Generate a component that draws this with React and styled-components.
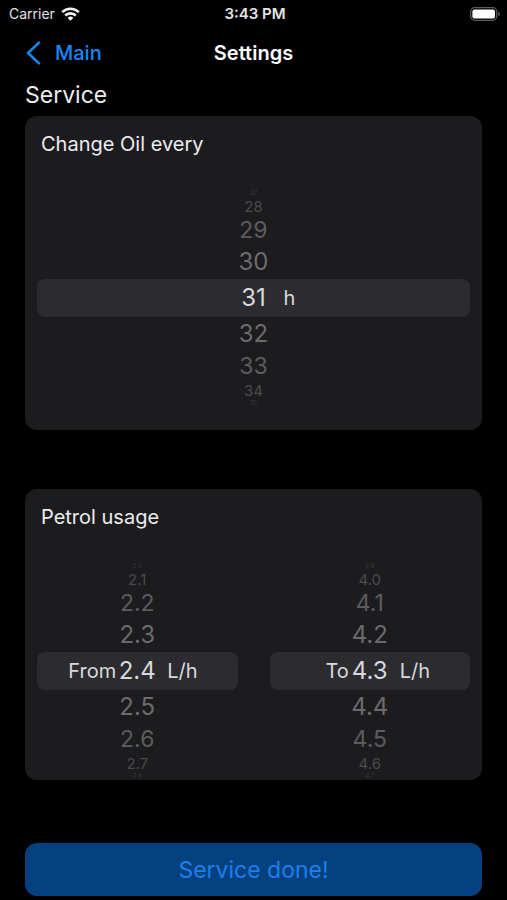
import { useState } from 'react';
import styled, { createGlobalStyle } from 'styled-components';

const GlobalStyle = createGlobalStyle`
    * {
        box-sizing: border-box;
    }

    body {
        margin: 0;
        background: #000000;
        color: #ececee;
        font-family: Inter, "Liberation Sans", sans-serif;
    }
`;

const Screen = styled.div`
    display: flex;
    flex-direction: column;
`;

const StatusBar = styled.div`
    display: grid;
    grid-template-columns: 1fr auto 1fr;
    align-items: center;
    height: 27px;
    padding: 0 6px 0 9px;
    font-size: 14px;
    color: #e4e4e4;
`;

const Carrier = styled.span`
    display: flex;
    align-items: center;
    gap: 6px;
`;

const Clock = styled.span`
    font-size: 15px;
    font-weight: 600;
`;

const BatteryIcon = styled.svg`
    justify-self: end;
`;

const NavBar = styled.nav`
    display: grid;
    grid-template-columns: 1fr auto 1fr;
    align-items: center;
    height: 52px;
    padding: 0 25px;
`;

const BackLink = styled.a`
    display: flex;
    align-items: center;
    gap: 14px;
    color: #1687f8;
    font-size: 20px;
    font-weight: 500;
    text-decoration: none;
`;

const NavTitle = styled.h1`
    margin: 0;
    color: #ffffff;
    font-size: 20px;
    font-weight: 600;
`;

const Content = styled.main`
    display: flex;
    flex-direction: column;
    padding: 0 25px 4px;
`;

const SectionTitle = styled.h2`
    margin: 0 0 5px;
    font-size: 23px;
    font-weight: 400;
    line-height: 32px;
`;

const Card = styled.section`
    margin-bottom: ${(props) => props.$gap}px;
    padding: 16px 0 ${(props) => props.$bottom}px;
    border-radius: 12px;
    background: #1c1c1e;
    overflow: hidden;
`;

const CardTitle = styled.h3`
    margin: 0 0 33px;
    padding: 0 16px;
    font-size: 20px;
    font-weight: 400;
    line-height: 24px;
`;

const Pickers = styled.div`
    display: grid;
    grid-auto-flow: column;
    grid-auto-columns: 1fr;
    gap: 32px;
    padding: 0 12px;
`;

const Wheel = styled.fieldset`
    display: flex;
    flex-direction: column;
    min-width: 0;
    margin: 0;
    padding: 0;
    border: none;
`;

// rows get smaller and darker the further they are from the middle
const ROWS = [
    { height: 38, font: 24, color: '#d8d8dc' },
    { height: 34, font: 24, color: '#6b6b6e' },
    { height: 30, font: 23, color: '#5c5c5f' },
    { height: 18, font: 15, color: '#4a4a4d' },
    { height: 8, font: 6, color: '#38383b' },
];

const WheelRow = styled.label`
    display: grid;
    grid-template-columns: 1fr 42px 1fr;
    align-items: center;
    height: ${(props) => ROWS[props.$distance].height}px;
    border-radius: 8px;
    background: ${(props) => (props.$distance === 0 ? '#2c2c30' : 'transparent')};
    color: ${(props) => ROWS[props.$distance].color};
    font-size: ${(props) => ROWS[props.$distance].font}px;
    line-height: 1;
    cursor: pointer;
`;

const Radio = styled.input`
    appearance: none;
    width: 0;
    height: 0;
    margin: 0;
    outline: none;
`;

const Prefix = styled.span`
    display: flex;
    justify-content: flex-end;
    font-size: 20px;
`;

const Value = styled.span`
    text-align: center;
`;

const Unit = styled.span`
    padding-left: 9px;
    font-size: 20px;
`;

const DoneButton = styled.button`
    height: 53px;
    border: none;
    border-radius: 12px;
    background: #05417e;
    color: #1a80ee;
    font-family: inherit;
    font-size: 23px;
    cursor: pointer;
`;

const Picker = ({ name, label, prefix, unit, start, step, digits }) => {
    const [value, setValue] = useState(start);
    const offsets = [-4, -3, -2, -1, 0, 1, 2, 3, 4];

    return (
        <Wheel aria-label={label}>
            {offsets.map((offset) => {
                const rowValue = value + offset * step;
                const text = rowValue.toFixed(digits);
                return (
                    <WheelRow key={text} $distance={Math.abs(offset)}>
                        <Prefix>
                            <Radio
                                type="radio"
                                name={name}
                                value={text}
                                checked={offset === 0}
                                onChange={() => setValue(rowValue)}
                            />
                            {offset === 0 && prefix}
                        </Prefix>
                        <Value>{text}</Value>
                        {offset === 0 && <Unit>{unit}</Unit>}
                    </WheelRow>
                );
            })}
        </Wheel>
    );
};

const App = () => {
    return (
        <Screen>
            <GlobalStyle />
            <StatusBar>
                <Carrier>
                    Carrier
                    <svg width="19" height="14" viewBox="0 0 19 14" fill="none" stroke="#f4f4f4" strokeWidth="2.6" aria-hidden="true">
                        <path d="M1.2 5.1a11.8 11.8 0 0 1 16.6 0" />
                        <path d="M4.2 8.5a7.6 7.6 0 0 1 10.6 0" />
                        <path d="M9.5 13.8 6.6 10.9a4.2 4.2 0 0 1 5.8 0z" fill="#f4f4f4" stroke="none" />
                    </svg>
                </Carrier>
                <Clock>3:43 PM</Clock>
                <BatteryIcon width="31" height="14" viewBox="0 0 31 14" aria-hidden="true">
                    <rect x="0.7" y="0.7" width="26" height="12.6" rx="4" fill="none" stroke="#5c5c5c" strokeWidth="1.3" />
                    <rect x="2.4" y="2.4" width="22.6" height="9.2" rx="2.2" fill="#ffffff" />
                    <path d="M28.2 4.8c2.2.6 2.2 3.8 0 4.4z" fill="#5c5c5c" />
                </BatteryIcon>
            </StatusBar>
            <NavBar>
                <BackLink href="#main">
                    <svg width="16" height="24" viewBox="0 0 16 24" fill="none" stroke="currentColor" strokeWidth="2.6" strokeLinecap="round" strokeLinejoin="round" aria-hidden="true">
                        <path d="M14 1.6 3 12l11 10.4" />
                    </svg>
                    Main
                </BackLink>
                <NavTitle>Settings</NavTitle>
            </NavBar>
            <Content>
                <SectionTitle>Service</SectionTitle>
                <Card $bottom={23} $gap={59}>
                    <CardTitle>Change Oil every</CardTitle>
                    <Pickers>
                        <Picker name="oil" label="Change oil every" unit="h" start={31} step={1} digits={0} />
                    </Pickers>
                </Card>
                <Card $bottom={0} $gap={63}>
                    <CardTitle>Petrol usage</CardTitle>
                    <Pickers>
                        <Picker name="from" label="Petrol usage from" prefix="From" unit="L/h" start={2.4} step={0.1} digits={1} />
                        <Picker name="to" label="Petrol usage to" prefix="To" unit="L/h" start={4.3} step={0.1} digits={1} />
                    </Pickers>
                </Card>
                <DoneButton type="button">Service done!</DoneButton>
            </Content>
        </Screen>
    );
};

export default App;
